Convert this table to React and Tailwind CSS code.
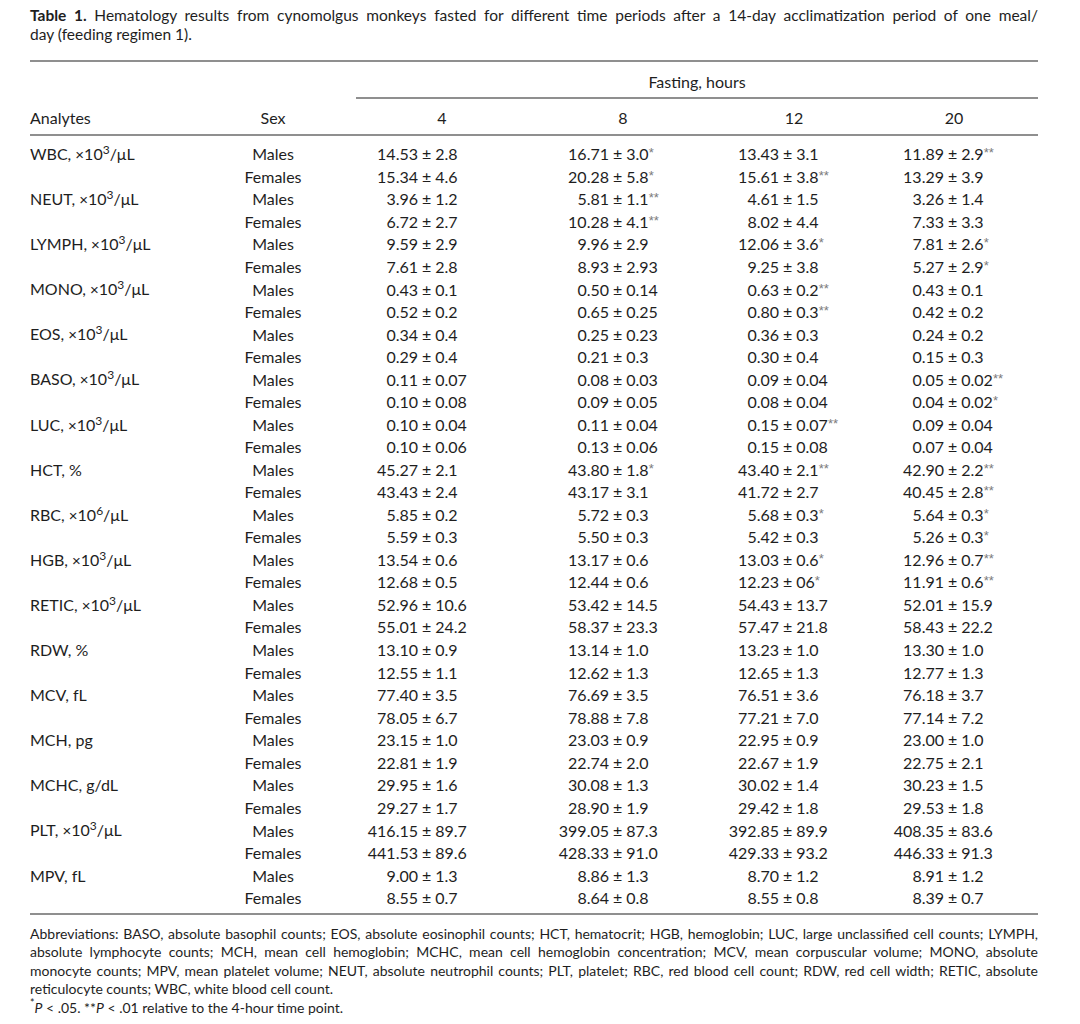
const rows = [
    ['WBC', 'x3', [
        ['14.53 ± 2.8', '16.71 ± 3.0*', '13.43 ± 3.1', '11.89 ± 2.9**'],
        ['15.34 ± 4.6', '20.28 ± 5.8*', '15.61 ± 3.8**', '13.29 ± 3.9'],
    ]],
    ['NEUT', 'x3', [
        ['3.96 ± 1.2', '5.81 ± 1.1**', '4.61 ± 1.5', '3.26 ± 1.4'],
        ['6.72 ± 2.7', '10.28 ± 4.1**', '8.02 ± 4.4', '7.33 ± 3.3'],
    ]],
    ['LYMPH', 'x3', [
        ['9.59 ± 2.9', '9.96 ± 2.9', '12.06 ± 3.6*', '7.81 ± 2.6*'],
        ['7.61 ± 2.8', '8.93 ± 2.93', '9.25 ± 3.8', '5.27 ± 2.9*'],
    ]],
    ['MONO', 'x3', [
        ['0.43 ± 0.1', '0.50 ± 0.14', '0.63 ± 0.2**', '0.43 ± 0.1'],
        ['0.52 ± 0.2', '0.65 ± 0.25', '0.80 ± 0.3**', '0.42 ± 0.2'],
    ]],
    ['EOS', 'x3', [
        ['0.34 ± 0.4', '0.25 ± 0.23', '0.36 ± 0.3', '0.24 ± 0.2'],
        ['0.29 ± 0.4', '0.21 ± 0.3', '0.30 ± 0.4', '0.15 ± 0.3'],
    ]],
    ['BASO', 'x3', [
        ['0.11 ± 0.07', '0.08 ± 0.03', '0.09 ± 0.04', '0.05 ± 0.02**'],
        ['0.10 ± 0.08', '0.09 ± 0.05', '0.08 ± 0.04', '0.04 ± 0.02*'],
    ]],
    ['LUC', 'x3', [
        ['0.10 ± 0.04', '0.11 ± 0.04', '0.15 ± 0.07**', '0.09 ± 0.04'],
        ['0.10 ± 0.06', '0.13 ± 0.06', '0.15 ± 0.08', '0.07 ± 0.04'],
    ]],
    ['HCT', '%', [
        ['45.27 ± 2.1', '43.80 ± 1.8*', '43.40 ± 2.1**', '42.90 ± 2.2**'],
        ['43.43 ± 2.4', '43.17 ± 3.1', '41.72 ± 2.7', '40.45 ± 2.8**'],
    ]],
    ['RBC', 'x6', [
        ['5.85 ± 0.2', '5.72 ± 0.3', '5.68 ± 0.3*', '5.64 ± 0.3*'],
        ['5.59 ± 0.3', '5.50 ± 0.3', '5.42 ± 0.3', '5.26 ± 0.3*'],
    ]],
    ['HGB', 'x3', [
        ['13.54 ± 0.6', '13.17 ± 0.6', '13.03 ± 0.6*', '12.96 ± 0.7**'],
        ['12.68 ± 0.5', '12.44 ± 0.6', '12.23 ± 06*', '11.91 ± 0.6**'],
    ]],
    ['RETIC', 'x3', [
        ['52.96 ± 10.6', '53.42 ± 14.5', '54.43 ± 13.7', '52.01 ± 15.9'],
        ['55.01 ± 24.2', '58.37 ± 23.3', '57.47 ± 21.8', '58.43 ± 22.2'],
    ]],
    ['RDW', '%', [
        ['13.10 ± 0.9', '13.14 ± 1.0', '13.23 ± 1.0', '13.30 ± 1.0'],
        ['12.55 ± 1.1', '12.62 ± 1.3', '12.65 ± 1.3', '12.77 ± 1.3'],
    ]],
    ['MCV', 'fL', [
        ['77.40 ± 3.5', '76.69 ± 3.5', '76.51 ± 3.6', '76.18 ± 3.7'],
        ['78.05 ± 6.7', '78.88 ± 7.8', '77.21 ± 7.0', '77.14 ± 7.2'],
    ]],
    ['MCH', 'pg', [
        ['23.15 ± 1.0', '23.03 ± 0.9', '22.95 ± 0.9', '23.00 ± 1.0'],
        ['22.81 ± 1.9', '22.74 ± 2.0', '22.67 ± 1.9', '22.75 ± 2.1'],
    ]],
    ['MCHC', 'g/dL', [
        ['29.95 ± 1.6', '30.08 ± 1.3', '30.02 ± 1.4', '30.23 ± 1.5'],
        ['29.27 ± 1.7', '28.90 ± 1.9', '29.42 ± 1.8', '29.53 ± 1.8'],
    ]],
    ['PLT', 'x3', [
        ['416.15 ± 89.7', '399.05 ± 87.3', '392.85 ± 89.9', '408.35 ± 83.6'],
        ['441.53 ± 89.6', '428.33 ± 91.0', '429.33 ± 93.2', '446.33 ± 91.3'],
    ]],
    ['MPV', 'fL', [
        ['9.00 ± 1.3', '8.86 ± 1.3', '8.70 ± 1.2', '8.91 ± 1.2'],
        ['8.55 ± 0.7', '8.64 ± 0.8', '8.55 ± 0.8', '8.39 ± 0.7'],
    ]],
];

// width of the number before ± in each fasting column, so the ± signs line up
const leftWidths = ['w-[62px]', 'w-[81px]', 'w-[61px]', 'w-[74px]'];

const gridCols = 'grid grid-cols-[214px_58px_54px_172px_190px_152px_168px]';

const Unit = ({ unit }) => {
    if (unit === 'x3' || unit === 'x6') {
        return (
            <>
                <span className="font-['Liberation_Sans',_sans-serif] text-[15px]">×</span>10<sup>{unit === 'x3' ? '3' : '6'}</sup>/μL
            </>
        );
    }
    return unit;
};

const Value = ({ text, idx }) => {
    const [mean, rest] = text.split(' ± ');
    const sd = rest.replace(/\*+$/, '');
    const stars = rest.slice(sd.length);
    return (
        <div className="flex items-center whitespace-nowrap">
            <span className={`${leftWidths[idx]} text-right`}>{mean}</span>
            <span className="px-[4px]">±</span>
            <span>{sd}</span>
            {stars && (
                <span className="font-['Liberation_Sans',_sans-serif] text-[13px] text-[#7a7a7a] self-start mt-[1px]">
                    {stars}
                </span>
            )}
        </div>
    );
};

const Rule = () => <div className="h-[2px] bg-[#8f8f8f]" />;

const App = () => {
    return (
        <div className="min-h-screen bg-white text-[#1e1e1e] font-['Lato',_'Liberation_Sans',_sans-serif]">
            <div className="ml-[30px] w-[1008px] pt-[6px]">
                <p className="text-[15.5px] leading-[19px] text-justify [text-align-last:justify]">
                    <span className="font-bold">Table 1.</span> Hematology results from cynomolgus monkeys fasted for different time periods after a 14-day acclimatization period of one meal/
                </p>
                <p className="text-[15.5px] leading-[19px]">day (feeding regimen 1).</p>

                <div className="mt-[16px]">
                    <Rule />
                    <div className={`${gridCols} h-[35px] pt-[4px] items-center text-[16px]`}>
                        <div className="col-start-4 col-span-4 text-center">Fasting, hours</div>
                    </div>
                    <div className="ml-[326px] h-[2px] bg-[#8f8f8f]" />
                    <div className={`${gridCols} h-[35px] pt-[3px] items-center text-[16px]`}>
                        <div>Analytes</div>
                        <div className="text-center">Sex</div>
                        <div />
                        <div className="text-center">4</div>
                        <div className="text-center">8</div>
                        <div className="text-center">12</div>
                        <div className="text-center">20</div>
                    </div>
                    <Rule />

                    <div className="pt-[6px] pb-[4px] text-[16px]">
                        {rows.map(([name, unit, pair]) =>
                            pair.map((vals, i) => (
                                <div key={name + i} className={`${gridCols} h-[22.55px] items-center`}>
                                    <div className="whitespace-nowrap">
                                        {i === 0 && (
                                            <>
                                                {name}, <Unit unit={unit} />
                                            </>
                                        )}
                                    </div>
                                    <div className="text-center">{i === 0 ? 'Males' : 'Females'}</div>
                                    <div />
                                    {vals.map((v, idx) => (
                                        <Value key={idx} text={v} idx={idx} />
                                    ))}
                                </div>
                            ))
                        )}
                    </div>
                    <Rule />
                </div>

                <div className="mt-[10px] text-[14px] leading-[18.5px]">
                    <p className="text-justify [text-align-last:justify] whitespace-nowrap">
                        Abbreviations: BASO, absolute basophil counts; EOS, absolute eosinophil counts; HCT, hematocrit; HGB, hemoglobin; LUC, large unclassified cell counts; LYMPH,
                    </p>
                    <p className="text-justify [text-align-last:justify]">
                        absolute lymphocyte counts; MCH, mean cell hemoglobin; MCHC, mean cell hemoglobin concentration; MCV, mean corpuscular volume; MONO, absolute
                    </p>
                    <p className="text-justify [text-align-last:justify]">
                        monocyte counts; MPV, mean platelet volume; NEUT, absolute neutrophil counts; PLT, platelet; RBC, red blood cell count; RDW, red cell width; RETIC, absolute
                    </p>
                    <p>reticulocyte counts; WBC, white blood cell count.</p>
                    <p>
                        <sup>*</sup>
                        <i>P</i> &lt; .05. **<i>P</i> &lt; .01 relative to the 4-hour time point.
                    </p>
                </div>
            </div>
        </div>
    );
};

export default App;
